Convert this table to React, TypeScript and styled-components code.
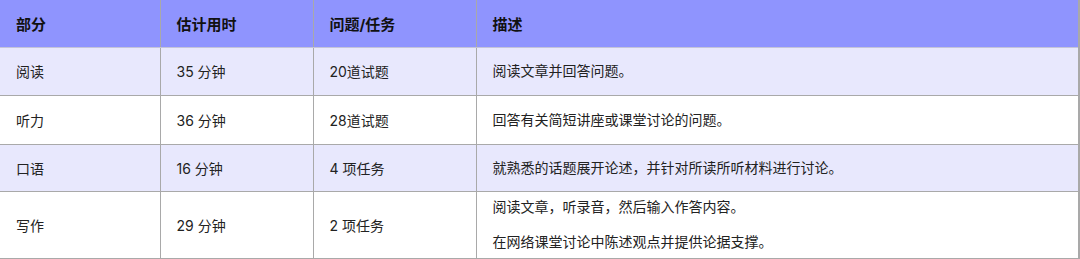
import React from "react";
import styled, { createGlobalStyle } from "styled-components";

const GlobalStyle = createGlobalStyle`
  html, body {
    margin: 0;
    padding: 0;
    background: #ffffff;
  }
`;

const Table = styled.table`
  width: 1080px;
  border-collapse: collapse;
  table-layout: fixed;
  font-family: "Inter", "Noto Sans CJK SC", sans-serif;
  color: #222;
`;

const HeadRow = styled.tr`
  height: 47px;
  background: #8f94fe;
`;

const Row = styled.tr<{ $shade?: boolean; $h: number }>`
  height: ${(p) => p.$h}px;
  background: ${(p) => (p.$shade ? "#e8e8fd" : "#ffffff")};
`;

const Th = styled.th`
  text-align: left;
  font-size: 15px;
  font-weight: 700;
  color: #111;
  padding: 0 16px;
  border-left: 1px solid #a9a9a9;
  border-bottom: 1px solid #c4c4d8;
  &:first-child {
    border-left: none;
  }
  &:last-child {
    border-right: 2px solid #a9a9a9;
  }
`;

const Td = styled.td`
  font-size: 14px;
  padding: 0 16px;
  border-left: 1px solid #a9a9a9;
  border-bottom: 1px solid #a9a9a9;
  vertical-align: middle;
  &:first-child {
    border-left: none;
  }
  &:last-child {
    border-right: 2px solid #a9a9a9;
  }
`;

const Para = styled.p`
  margin: 0;
  line-height: 20px;
  & + & {
    margin-top: 15px;
  }
`;

const rows = [
  { part: "阅读", time: "35 分钟", task: "20道试题", desc: ["阅读文章并回答问题。"], h: 48, shade: true },
  { part: "听力", time: "36 分钟", task: "28道试题", desc: ["回答有关简短讲座或课堂讨论的问题。"], h: 49, shade: false },
  { part: "口语", time: "16 分钟", task: "4 项任务", desc: ["就熟悉的话题展开论述，并针对所读所听材料进行讨论。"], h: 47, shade: true },
  {
    part: "写作",
    time: "29 分钟",
    task: "2 项任务",
    desc: ["阅读文章，听录音，然后输入作答内容。", "在网络课堂讨论中陈述观点并提供论据支撑。"],
    h: 67,
    shade: false,
  },
];

export default function App() {
  return (
    <>
      <GlobalStyle />
      <Table>
        <colgroup>
          <col style={{ width: 160 }} />
          <col style={{ width: 153 }} />
          <col style={{ width: 163 }} />
          <col />
        </colgroup>
        <thead>
          <HeadRow>
            <Th>部分</Th>
            <Th>估计用时</Th>
            <Th>问题/任务</Th>
            <Th>描述</Th>
          </HeadRow>
        </thead>
        <tbody>
          {rows.map((r) => (
            <Row key={r.part} $shade={r.shade} $h={r.h}>
              <Td>{r.part}</Td>
              <Td>{r.time}</Td>
              <Td>{r.task}</Td>
              <Td>
                {r.desc.map((d) => (
                  <Para key={d}>{d}</Para>
                ))}
              </Td>
            </Row>
          ))}
        </tbody>
      </Table>
    </>
  );
}
